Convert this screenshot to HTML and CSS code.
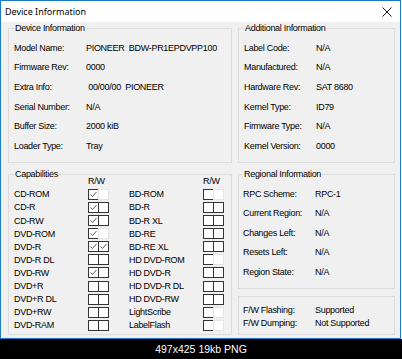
FILE: index.html
```html
<!DOCTYPE html>
<html lang="en">
<head>
    <meta charset="UTF-8">
    <title>Device Information</title>
    <link rel="stylesheet" href="styles.css">
</head>
<body>
    <div class="window">
        <div class="titlebar">
            <span>Device Information</span>
            <svg class="close" width="10" height="10" viewBox="0 0 10 10">
                <path d="M0.5 0.5L9.5 9.5M9.5 0.5L0.5 9.5" stroke="#111" stroke-width="1" fill="none"/>
            </svg>
        </div>
        <div class="client">
            <fieldset class="group">
                <legend>Device Information</legend>
                <div class="row"><span class="key">Model Name:</span><span class="val">PIONEER  BDW-PR1EPDVPP100</span></div>
                <div class="row"><span class="key">Firmware Rev:</span><span class="val">0000</span></div>
                <div class="row"><span class="key">Extra Info:</span><span class="val"> 00/00/00  PIONEER</span></div>
                <div class="row"><span class="key">Serial Number:</span><span class="val">N/A</span></div>
                <div class="row"><span class="key">Buffer Size:</span><span class="val">2000 kiB</span></div>
                <div class="row"><span class="key">Loader Type:</span><span class="val">Tray</span></div>
            </fieldset>

            <fieldset class="group">
                <legend>Additional Information</legend>
                <div class="row"><span class="key">Label Code:</span><span class="val">N/A</span></div>
                <div class="row"><span class="key">Manufactured:</span><span class="val">N/A</span></div>
                <div class="row"><span class="key">Hardware Rev:</span><span class="val">SAT 8680</span></div>
                <div class="row"><span class="key">Kernel Type:</span><span class="val">ID79</span></div>
                <div class="row"><span class="key">Firmware Type:</span><span class="val">N/A</span></div>
                <div class="row"><span class="key">Kernel Version:</span><span class="val">0000</span></div>
            </fieldset>

            <fieldset class="group caps">
                <legend>Capabilities</legend>
                <div class="caps-grid">
                    <span></span><span class="rw">R/W</span><span></span><span></span><span class="rw">R/W</span>

                    <span>CD-ROM</span>
                    <span class="boxes"><i class="box on"><svg viewBox="0 0 9 9"><polyline points="1.5,4.5 3.5,6.5 7.5,2"/></svg></i><i class="box off"></i></span>
                    <span></span>
                    <span>BD-ROM</span>
                    <span class="boxes"><i class="box"></i><i class="box off"></i></span>

                    <span>CD-R</span>
                    <span class="boxes"><i class="box on"><svg viewBox="0 0 9 9"><polyline points="1.5,4.5 3.5,6.5 7.5,2"/></svg></i><i class="box"></i></span>
                    <span></span>
                    <span>BD-R</span>
                    <span class="boxes"><i class="box"></i><i class="box"></i></span>

                    <span>CD-RW</span>
                    <span class="boxes"><i class="box on"><svg viewBox="0 0 9 9"><polyline points="1.5,4.5 3.5,6.5 7.5,2"/></svg></i><i class="box"></i></span>
                    <span></span>
                    <span>BD-R XL</span>
                    <span class="boxes"><i class="box"></i><i class="box"></i></span>

                    <span>DVD-ROM</span>
                    <span class="boxes"><i class="box on"><svg viewBox="0 0 9 9"><polyline points="1.5,4.5 3.5,6.5 7.5,2"/></svg></i><i class="box off"></i></span>
                    <span></span>
                    <span>BD-RE</span>
                    <span class="boxes"><i class="box"></i><i class="box"></i></span>

                    <span>DVD-R</span>
                    <span class="boxes"><i class="box on"><svg viewBox="0 0 9 9"><polyline points="1.5,4.5 3.5,6.5 7.5,2"/></svg></i><i class="box on"><svg viewBox="0 0 9 9"><polyline points="1.5,4.5 3.5,6.5 7.5,2"/></svg></i></span>
                    <span></span>
                    <span>BD-RE XL</span>
                    <span class="boxes"><i class="box"></i><i class="box"></i></span>

                    <span>DVD-R DL</span>
                    <span class="boxes"><i class="box"></i><i class="box"></i></span>
                    <span></span>
                    <span>HD DVD-ROM</span>
                    <span class="boxes"><i class="box"></i><i class="box off"></i></span>

                    <span>DVD-RW</span>
                    <span class="boxes"><i class="box on"><svg viewBox="0 0 9 9"><polyline points="1.5,4.5 3.5,6.5 7.5,2"/></svg></i><i class="box"></i></span>
                    <span></span>
                    <span>HD DVD-R</span>
                    <span class="boxes"><i class="box"></i><i class="box"></i></span>

                    <span>DVD+R</span>
                    <span class="boxes"><i class="box"></i><i class="box"></i></span>
                    <span></span>
                    <span>HD DVD-R DL</span>
                    <span class="boxes"><i class="box"></i><i class="box"></i></span>

                    <span>DVD+R DL</span>
                    <span class="boxes"><i class="box"></i><i class="box"></i></span>
                    <span></span>
                    <span>HD DVD-RW</span>
                    <span class="boxes"><i class="box"></i><i class="box"></i></span>

                    <span>DVD+RW</span>
                    <span class="boxes"><i class="box"></i><i class="box"></i></span>
                    <span></span>
                    <span>LightScribe</span>
                    <span class="boxes"><i class="box"></i><i class="box off"></i></span>

                    <span>DVD-RAM</span>
                    <span class="boxes"><i class="box"></i><i class="box"></i></span>
                    <span></span>
                    <span>LabelFlash</span>
                    <span class="boxes"><i class="box"></i><i class="box off"></i></span>
                </div>
            </fieldset>

            <div class="side">
                <fieldset class="group regional">
                    <legend>Regional Information</legend>
                    <div class="row"><span class="key">RPC Scheme:</span><span class="val">RPC-1</span></div>
                    <div class="row"><span class="key">Current Region:</span><span class="val">N/A</span></div>
                    <div class="row"><span class="key">Changes Left:</span><span class="val">N/A</span></div>
                    <div class="row"><span class="key">Resets Left:</span><span class="val">N/A</span></div>
                    <div class="row"><span class="key">Region State:</span><span class="val">N/A</span></div>
                </fieldset>
                <fieldset class="group fw">
                    <div class="row"><span class="key">F/W Flashing:</span><span class="val">Supported</span></div>
                    <div class="row"><span class="key">F/W Dumping:</span><span class="val">Not Supported</span></div>
                </fieldset>
            </div>
        </div>
    </div>
    <div class="caption">497x425 19kb PNG</div>
</body>
</html>
```

FILE: styles.css
```css
* {
    box-sizing: border-box;
}
body {
    margin: 0;
    width: 402px;
    height: 359px;
    overflow: hidden;
    background: #fff;
    font-family: "Liberation Sans", Arial, sans-serif;
    font-size: 9px;
    letter-spacing: -0.3px;
    color: #000;
}
.window {
    width: 401px;
    height: 339px;
    border: 1px solid #1979ca;
    background: #f0f0f0;
    display: flex;
    flex-direction: column;
}
.titlebar {
    height: 21px;
    flex: none;
    background: #fff;
    display: flex;
    align-items: center;
    justify-content: space-between;
    padding: 0 8px 0 4px;
    font-family: "Noto Sans", sans-serif;
    font-size: 9px;
    letter-spacing: 0;
}
.client {
    flex: 1;
    padding: 0 0 0 7px;
    display: grid;
    grid-template-columns: 224px 157px;
    grid-template-rows: auto auto;
    column-gap: 6px;
    row-gap: 2px;
    align-items: start;
}
.group {
    margin: 0;
    border: 1px solid #dcdcdc;
    padding: 3px 5px 6px 5px;
    min-width: 0;
}
.group legend {
    padding: 0 1px;
    line-height: 13px;
    height: 13px;
}
.row {
    display: flex;
    align-items: center;
    height: 19.6px;
    white-space: pre;
}
.key {
    width: 72px;
    flex: none;
}
.caps {
    padding: 0 5px 2px 5px;
}
.caps-grid {
    margin-top: -6px;
    display: grid;
    grid-template-columns: 74px 22px 19px 74px 22px;
    grid-auto-rows: 13.1px;
    align-items: center;
    white-space: nowrap;
}
.rw {
    letter-spacing: -0.2px;
}
.boxes {
    display: flex;
}
.box {
    width: 11px;
    height: 11px;
    border: 1px solid #333;
    background: #fff;
    display: block;
}
.box + .box {
    margin-left: -1px;
}
.box.off {
    border-color: #e4e4e4;
}
.box svg {
    display: block;
    width: 9px;
    height: 9px;
    fill: none;
    stroke: #555;
    stroke-width: 1;
}
.side {
    display: flex;
    flex-direction: column;
    gap: 7px;
}
.regional {
    padding: 3px 5px 6px 4px;
}
.fw {
    padding: 7px 5px 4px 4px;
}
.fw .row {
    height: 13px;
}
.caption {
    height: 20px;
    background: #000;
    color: #fff;
    font-size: 10.5px;
    letter-spacing: 0;
    line-height: 20px;
    text-align: center;
}
```
